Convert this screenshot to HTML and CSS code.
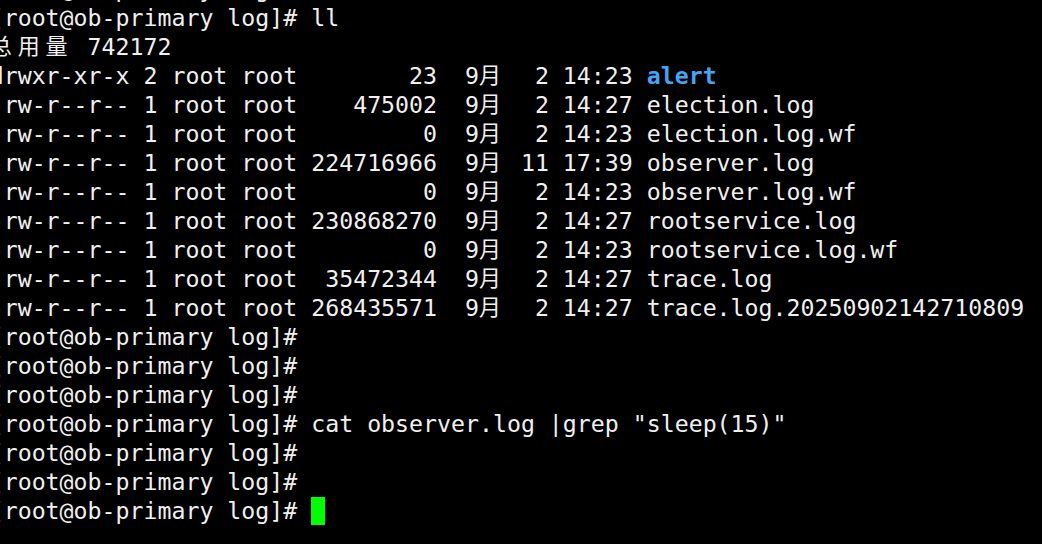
FILE: index.html
```html
<!DOCTYPE html>
<html lang="zh-CN">
<head>
<meta charset="utf-8">
<title>Terminal</title>
<link rel="stylesheet" href="styles.css">
</head>
<body>
<div class="term">
<div class="line">[root@ob-primary log]# </div>
<div class="line">[root@ob-primary log]# ll</div>
<div class="line"><span class="w">总</span><span class="w">用</span><span class="w">量</span> 742172</div>
<div class="line">drwxr-xr-x 2 root root        23  9<span class="w">月</span>  2 14:23 <span class="dir">alert</span></div>
<div class="line">-rw-r--r-- 1 root root    475002  9<span class="w">月</span>  2 14:27 election.log</div>
<div class="line">-rw-r--r-- 1 root root         0  9<span class="w">月</span>  2 14:23 election.log.wf</div>
<div class="line">-rw-r--r-- 1 root root 224716966  9<span class="w">月</span> 11 17:39 observer.log</div>
<div class="line">-rw-r--r-- 1 root root         0  9<span class="w">月</span>  2 14:23 observer.log.wf</div>
<div class="line">-rw-r--r-- 1 root root 230868270  9<span class="w">月</span>  2 14:27 rootservice.log</div>
<div class="line">-rw-r--r-- 1 root root         0  9<span class="w">月</span>  2 14:23 rootservice.log.wf</div>
<div class="line">-rw-r--r-- 1 root root  35472344  9<span class="w">月</span>  2 14:27 trace.log</div>
<div class="line">-rw-r--r-- 1 root root 268435571  9<span class="w">月</span>  2 14:27 trace.log.20250902142710809</div>
<div class="line">[root@ob-primary log]#</div>
<div class="line">[root@ob-primary log]#</div>
<div class="line">[root@ob-primary log]#</div>
<div class="line">[root@ob-primary log]# cat observer.log |grep "sleep(15)"</div>
<div class="line">[root@ob-primary log]#</div>
<div class="line">[root@ob-primary log]#</div>
<div class="line">[root@ob-primary log]# <span class="cursor"></span></div>
</div>
</body>
</html>
```

FILE: styles.css
```css
html, body {
  margin: 0;
  padding: 0;
  background: #000000;
  overflow: hidden;
}

body {
  width: 1042px;
  height: 544px;
}

.term {
  margin: -26.5px 0 0 -10.3px;
  font-family: "DejaVu Sans Mono", "Noto Sans CJK SC", monospace;
  font-size: 23.23px;
  line-height: 29px;
  color: #f0f0f0;
}

.line {
  height: 29px;
  white-space: pre;
  overflow: visible;
}

.w {
  display: inline-block;
  width: 2ch;
  height: 29px;
  line-height: 27px;
  vertical-align: top;
  overflow: hidden;
}

.w::first-letter {
  font-size: 22px;
}

.dir {
  color: #46a4f4;
  font-weight: bold;
}

.cursor {
  display: inline-block;
  width: 1ch;
  height: 28px;
  margin-top: 1.5px;
  vertical-align: top;
  background: #00ff00;
}
```
